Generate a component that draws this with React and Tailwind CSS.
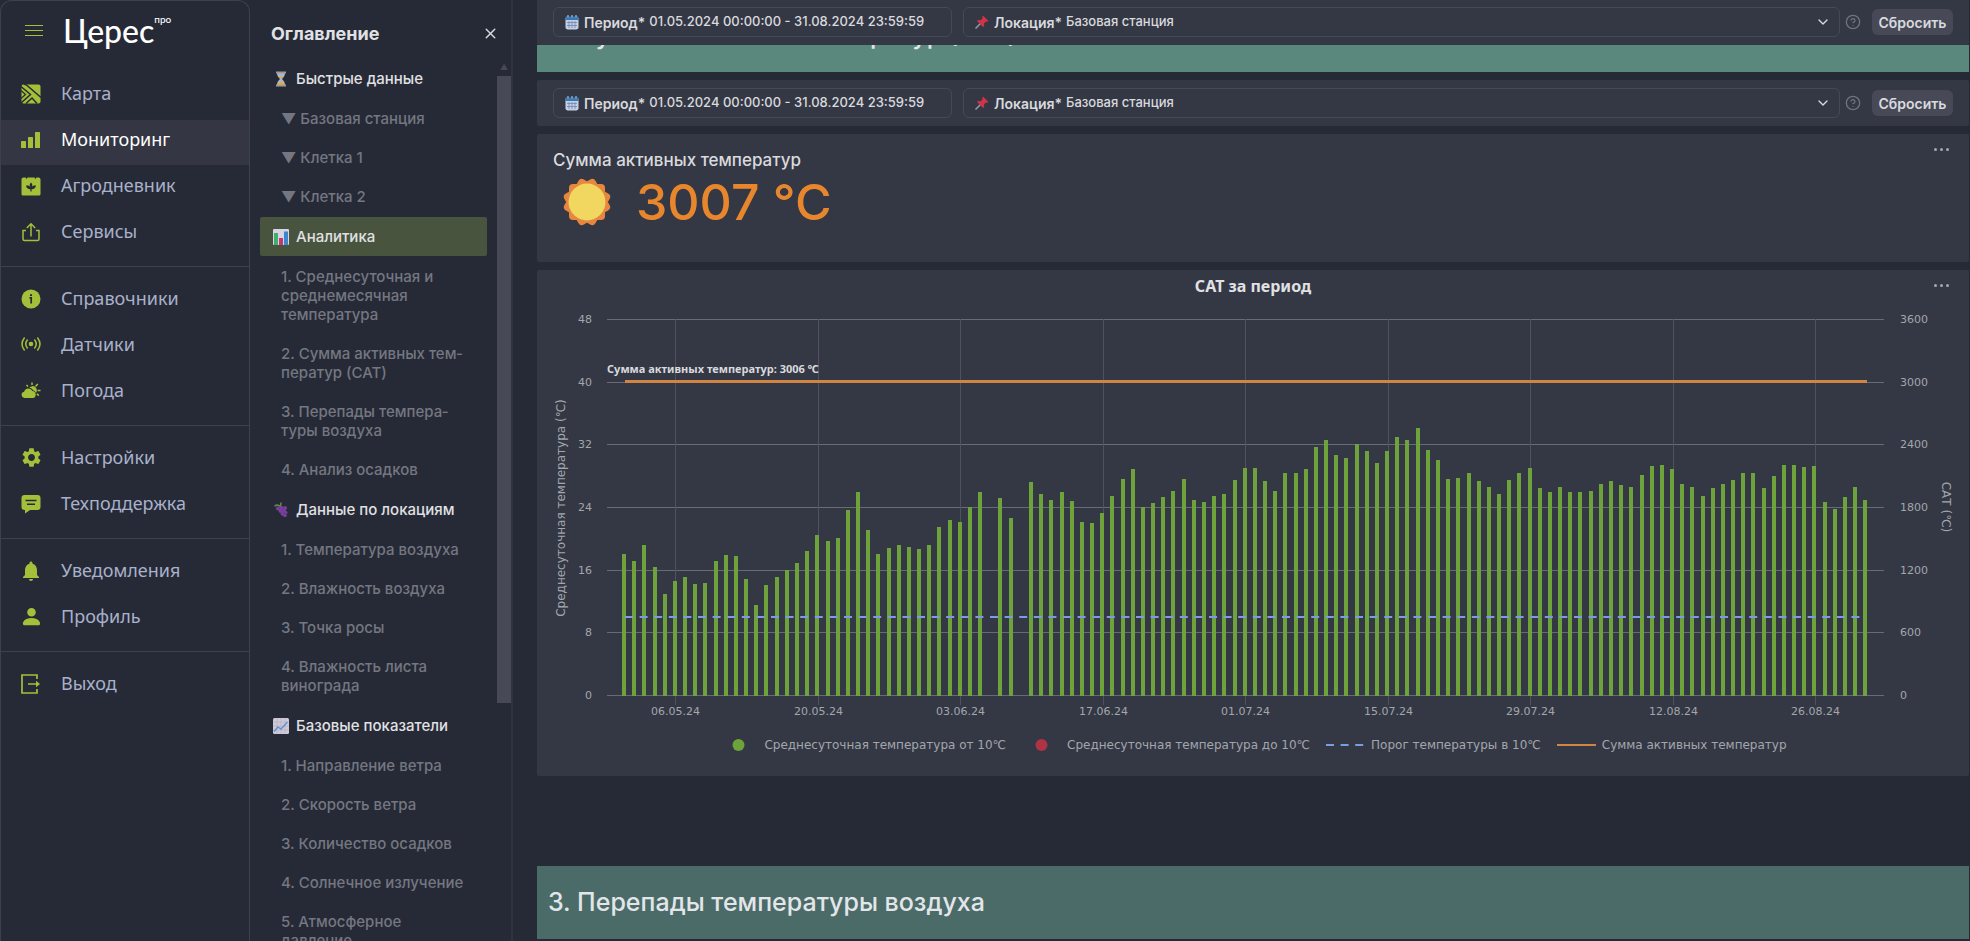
import { MdSettings, MdNotifications } from 'react-icons/md';
import { BsPersonFill } from 'react-icons/bs';
import { LuChevronDown, LuCircleHelp, LuX } from 'react-icons/lu';

const temps = [
  18.0, 17.1, 19.1, 16.3, 12.9, 14.6, 15.1, 14.2, 14.3, 17.1, 17.9, 17.7, 14.8, 11.5, 14.0, 15.1, 15.9, 16.8, 18.4, 20.4,
  19.7, 20.0, 23.6, 25.9, 21.1, 18.0, 18.8, 19.2, 18.9, 18.7, 19.1, 21.4, 22.4, 22.1, 24.0, 25.9, null, 25.2, 22.6, null,
  27.2, 25.7, 24.9, 25.9, 24.8, 22.1, 21.9, 23.2, 25.4, 27.6, 28.9, 24.0, 24.5, 25.3, 26.1, 27.6, 24.9, 24.7, 25.4, 25.7,
  27.4, 29.0, 29.0, 27.3, 26.0, 28.4, 28.4, 28.9, 31.7, 32.6, 30.6, 30.3, 32.0, 31.2, 29.6, 31.2, 33.0, 32.6, 34.1, 31.3,
  30.0, 27.6, 27.7, 28.4, 27.3, 26.6, 25.7, 27.4, 28.3, 29.0, 26.4, 25.9, 26.5, 25.9, 25.9, 26.1, 26.9, 27.3, 26.8, 26.6,
  28.1, 29.2, 29.3, 28.8, 26.9, 26.6, 25.4, 26.4, 26.9, 27.4, 28.4, 28.4, 26.4, 28.0, 29.3, 29.3, 29.1, 29.2, 24.7, 23.7,
  25.3, 26.6, 24.9,
];

const dateTicks = ['06.05.24', '20.05.24', '03.06.24', '17.06.24', '01.07.24', '15.07.24', '29.07.24', '12.08.24', '26.08.24'];

/* ---------- menu icons ---------- */

const MapIcon = () => (
  <svg viewBox="0 0 20 20" className="size-5">
    <rect x="0.5" y="0.5" width="19" height="19" rx="2" fill="#a4bf3a" />
    <path d="M0 2.500 9.500 10.500 0 19M5 19.500 11 14l5 5.500M5.500 1 20 13.500M3 0l2.500 1" fill="none" stroke="#262a36" strokeWidth="1.500" />
    <path d="M0 6.500 4.500 10.500 0 14.500" fill="none" stroke="#262a36" strokeWidth="1.300" />
  </svg>
);

const BarsIcon = () => (
  <svg viewBox="0 0 20 20" className="size-5" fill="#a4bf3a">
    <rect x="0" y="11" width="5" height="7" rx="0.6" />
    <rect x="7" y="7" width="5" height="11" rx="0.6" />
    <rect x="14" y="2" width="5" height="16" rx="0.6" />
  </svg>
);

const DiaryIcon = () => (
  <svg viewBox="0 0 20 20" className="size-5">
    <path d="M2.500 1.500h2l1 1.500 1-1.500h7l1 1.500 1-1.500h2a2 2 0 0 1 2 2V18a1.500 1.500 0 0 1-1.500 1.500H2A1.500 1.500 0 0 1 .5 18V3.500a2 2 0 0 1 2-2Z" fill="#a4bf3a" />
    <path d="M10 6.500c1.600 1.500 1.600 3.300.8 4.400 1-1 2.500-1.500 4.200-1.200-.5 2.400-2.200 3.600-4.400 3.500v2.300H9.400v-2.300C7.200 13.300 5.500 12.100 5 9.700c1.700-.3 3.200.2 4.200 1.200-.8-1.100-.8-2.900.8-4.400Z" fill="#262a36" />
  </svg>
);

const ShareIcon = () => (
  <svg viewBox="0 0 20 20" className="size-5" fill="none" stroke="#a4bf3a" strokeWidth="1.500">
    <path d="M5 8.500H2v8.500q0 1.500 1.500 1.500h13q1.500 0 1.500-1.500V8.500h-3" />
    <path d="M10 14.500V2M5.800 6 10 1.800 14.200 6" />
  </svg>
);

const InfoIcon = () => (
  <svg viewBox="0 0 20 20" className="size-5">
    <circle cx="10" cy="10" r="9.500" fill="#a4bf3a" />
    <path d="M10 5.200v1.900" stroke="#262a36" strokeWidth="2" />
    <path d="M8.500 8.800H10.200V14.500" fill="none" stroke="#262a36" strokeWidth="1.700" />
  </svg>
);

const SensorIcon = () => (
  <svg viewBox="0 0 20 20" className="size-5" fill="none" stroke="#a4bf3a" strokeWidth="1.500" strokeLinecap="round">
    <circle cx="10" cy="9" r="2.300" fill="#a4bf3a" stroke="none" />
    <path d="M6.300 5Q3.200 9 6.300 13M3.300 3Q-1.300 9 3.300 15M13.700 5Q16.800 9 13.700 13M16.700 3Q21.300 9 16.700 15" />
  </svg>
);

const WeatherIcon = () => (
  <svg viewBox="0 0 20 20" className="size-5">
    <path d="M3.400 17a3.200 3.200 0 0 1-.3-6.300A4.500 4.500 0 0 1 11.500 10a3.600 3.600 0 0 1 .7 7Z" fill="#a4bf3a" />
    <path d="M8.300 6.700a4 4 0 0 1 6.600 5.300 4.600 4.600 0 0 0-2.700-2.700 5.500 5.500 0 0 0-3.900-2.600Z" fill="#a4bf3a" />
    <path d="M11 4V1.500M14.500 5.500l2.300-2.500M16.500 9.500H19.500M15.800 12.800l2 1.800M7 5.500 5.500 4" stroke="#a4bf3a" strokeWidth="1.500" />
  </svg>
);

const ChatIcon = () => (
  <svg viewBox="0 0 20 20" className="size-5">
    <path d="M3.500 1h13a3 3 0 0 1 3 3v9a3 3 0 0 1-3 3H9l-5 3.500V16h-.5a3 3 0 0 1-3-3V4a3 3 0 0 1 3-3Z" fill="#a4bf3a" />
    <path d="M4.500 6.500h11M6 10.300h8" stroke="#262a36" strokeWidth="1.500" />
  </svg>
);

const ExitIcon = () => (
  <svg viewBox="0 0 20 20" className="size-5" fill="none" stroke="#a4bf3a" strokeWidth="1.700">
    <path d="M16 5V1H1v18h15v-4M7 10h10" />
    <path d="M15 6.800 19 10l-4 3.200Z" fill="#a4bf3a" stroke="none" />
  </svg>
);

/* ---------- small coloured pictograms ---------- */

const HourglassIcon = () => (
  <svg viewBox="0 0 16 16" className="size-4">
    <path d="M4 2h8c0 3-1.500 4.500-3 6 1.500 1.500 3 3 3 6H4c0-3 1.500-4.500 3-6C5.500 6.500 4 5 4 2Z" fill="#9dbbe0" />
    <path d="M5.500 5h5Q10 6.500 8 8 6 6.500 5.500 5ZM4.800 14Q5.500 10.500 8 10t3.200 4Z" fill="#e0ad4e" />
    <path d="M3 .5h10v2H3ZM3 13.500h10v2H3Z" fill="#a99a90" />
  </svg>
);

const ChartEmoji = () => (
  <svg viewBox="0 0 16 16" className="size-4">
    <rect width="16" height="16" rx="1" fill="#d7d4e6" />
    <rect x="1" y="4" width="4" height="12" fill="#43ad6b" />
    <rect x="6" y="9" width="4" height="7" fill="#c23a72" />
    <rect x="11" y="2.500" width="4" height="13.500" fill="#3b86cc" />
  </svg>
);

const GrapesIcon = () => (
  <svg viewBox="0 0 16 16" className="size-4">
    <path d="M1.500 4q3-2 6 .5l.5-4" fill="none" stroke="#5d8a48" strokeWidth="1.600" />
    <g fill="#7a3f9d">
      <circle cx="5" cy="6.500" r="2" />
      <circle cx="8.500" cy="6" r="2" />
      <circle cx="12" cy="6" r="2" />
      <circle cx="7.500" cy="9" r="2" />
      <circle cx="11" cy="9" r="2" />
      <circle cx="9.500" cy="11.800" r="1.900" />
      <circle cx="12" cy="13.500" r="1.800" />
      <circle cx="13" cy="10.500" r="1.500" />
    </g>
  </svg>
);

const TrendIcon = () => (
  <svg viewBox="0 0 16 16" className="size-4">
    <rect width="16" height="16" rx="1.500" fill="#cdcbd8" />
    <path d="M4 0v16M8 0v16M12 0v16M0 4h16M0 8h16M0 12h16" stroke="#b6adc4" strokeWidth="0.6" />
    <path d="M1 13.500 5 9l3 2 6.500-7" fill="none" stroke="#5e94cf" strokeWidth="1.400" />
  </svg>
);

const CalendarIcon = () => (
  <svg viewBox="0 0 16 16" className="size-4 shrink-0">
    <path d="M1.500 4h13v9.500q0 1.500-2 2h-9q-2-.5-2-2Z" fill="#c6cfe2" />
    <path d="M1.500 2.500h13V6h-13Z" fill="#3c77b5" />
    <path d="M4 1v2.500M8 1v2.500M12 1v2.500" stroke="#b9d0ea" strokeWidth="1" />
    <path d="M5 7v7M8 7v7M11 7v7M3 8.500h10M3 11.500h10" stroke="#6c86b8" strokeWidth="0.8" />
  </svg>
);

const PinIcon = () => (
  <svg viewBox="0 0 16 16" className="size-4 shrink-0">
    <path d="M1.500 14.500 7 9" stroke="#8d98a8" strokeWidth="1.600" />
    <path d="M9 1.500 14.500 7l-1.800.8-.9-.3-1.800 2 .2 2.500-1 1L3 7l1-1 2.500.2 2-1.800-.3-1.100Z" fill="#d13446" />
  </svg>
);

const SunIcon = () => (
  <svg viewBox="0 0 50 50" className="size-[50px]">
    {[0, 30, 60].map((a) => (
      <rect key={a} x="7" y="7" width="36" height="36" rx="4" fill="#e6863f" transform={`rotate(${a} 25 25)`} />
    ))}
    <circle cx="25" cy="25" r="18.500" fill="#f1d65f" />
  </svg>
);

/* ---------- left menu ---------- */

const menu = [
  [
    { label: 'Карта', icon: <MapIcon /> },
    { label: 'Мониторинг', icon: <BarsIcon />, active: true },
    { label: 'Агродневник', icon: <DiaryIcon /> },
    { label: 'Сервисы', icon: <ShareIcon /> },
  ],
  [
    { label: 'Справочники', icon: <InfoIcon /> },
    { label: 'Датчики', icon: <SensorIcon /> },
    { label: 'Погода', icon: <WeatherIcon /> },
  ],
  [
    { label: 'Настройки', icon: <MdSettings size={23} /> },
    { label: 'Техподдержка', icon: <ChatIcon /> },
  ],
  [
    { label: 'Уведомления', icon: <MdNotifications size={24} /> },
    { label: 'Профиль', icon: <BsPersonFill size={23} /> },
  ],
  [{ label: 'Выход', icon: <ExitIcon /> }],
];

function Sidebar() {
  return (
    <aside className="w-[250px] shrink-0 rounded-t-xl border border-b-0 border-[#3d414d] bg-[#262a36]">
      <div className="flex h-[73px] items-start gap-5 pl-6 pt-3">
        <button aria-label="Меню" className="mt-3 flex w-[18px] flex-col gap-1">
          <span className="h-px bg-[#a4bf3a]" />
          <span className="h-px bg-[#a4bf3a]" />
          <span className="h-px bg-[#a4bf3a]" />
        </button>
        <a href="#home" className="flex items-start font-['Lato'] font-medium text-white">
          <span className="text-[32px] leading-9">Церес</span>
          <span className="text-[10px] leading-3">про</span>
        </a>
      </div>
      <nav>
        {menu.map((group, i) => (
          <ul key={i} className={i ? 'mt-[9px] border-t border-[#3d414d] pt-3' : ''}>
            {group.map((item) => (
              <li key={item.label}>
                <a
                  href="#menu"
                  className={`mb-px flex h-[45px] items-center gap-5 pb-1.5 pl-5 font-['Noto_Sans'] text-[18px] ${
                    item.active ? 'bg-[#343743] text-white' : 'text-[#a9b1cb]'
                  }`}
                >
                  <span className="flex w-5 justify-center text-[#a4bf3a] [&>svg]:shrink-0">{item.icon}</span>
                  {item.label}
                </a>
              </li>
            ))}
          </ul>
        ))}
      </nav>
    </aside>
  );
}

/* ---------- table of contents ---------- */

const toc = [
  {
    title: 'Быстрые данные',
    icon: <HourglassIcon />,
    items: ['▼ Базовая станция', '▼ Клетка 1', '▼ Клетка 2'],
  },
  {
    title: 'Аналитика',
    icon: <ChartEmoji />,
    active: true,
    items: [
      '1. Среднесуточная и среднемесячная температура',
      '2. Сумма активных тем\u00adператур (САТ)',
      '3. Перепады темпера\u00adтуры воздуха',
      '4. Анализ осадков',
    ],
  },
  {
    title: 'Данные по локациям',
    icon: <GrapesIcon />,
    items: ['1. Температура воздуха', '2. Влажность воздуха', '3. Точка росы', '4. Влажность листа винограда'],
  },
  {
    title: 'Базовые показатели',
    icon: <TrendIcon />,
    items: [
      '1. Направление ветра',
      '2. Скорость ветра',
      '3. Количество осадков',
      '4. Солнечное излучение',
      '5. Атмосферное давление',
    ],
  },
];

function Contents() {
  return (
    <section className="flex w-[263px] shrink-0 flex-col border-r-2 border-[#31343f] bg-[#262a36]">
      <div className="flex h-[58px] shrink-0 items-center justify-between pl-[21px] pr-3 pt-2">
        <h2 className="text-[18px] font-bold text-[#e0e1e4]">Оглавление</h2>
        <button aria-label="Закрыть" className="text-[#d8dade]">
          <LuX size={17} />
        </button>
      </div>
      <div className="flex min-h-0 flex-1 overflow-hidden">
        <div className="min-w-0 flex-1 pl-2.5 text-[15px] leading-[19px] font-medium">
          {toc.map((section) => (
            <div key={section.title}>
              <a
                href="#section"
                className={`my-px flex items-center gap-[7px] rounded-xs px-[13px] py-2.5 text-[#e0e1e4] ${
                  section.active ? 'bg-[#49543f]' : ''
                }`}
              >
                {section.icon}
                {section.title}
              </a>
              {section.items.map((item) => (
                <a key={item} href="#item" className="block py-2.5 pl-[21px] pr-4 text-[#747781]">
                  {item}
                </a>
              ))}
            </div>
          ))}
        </div>
        <div className="ml-2.5 flex w-[14px] flex-col items-center">
          <span className="flex h-[18px] items-center text-[8px] leading-none text-[#474a56]">▲</span>
          <span className="h-[627px] w-full bg-[#474a56]" />
        </div>
      </div>
    </section>
  );
}

/* ---------- dashboard ---------- */

function FilterBar({ id }) {
  return (
    <div className="flex h-[46px] items-center rounded-xs bg-[#343844] px-4 text-[14px] font-medium text-[#d9dade]">
      <div className="flex h-[30px] w-[399px] items-center rounded-md border border-[#464a56] px-2.5">
        <CalendarIcon />
        <label htmlFor={`${id}-period`} className="ml-1 font-semibold">
          Период*
        </label>
        <input
          id={`${id}-period`}
          readOnly
          value="01.05.2024 00:00:00 - 31.08.2024 23:59:59"
          className="ml-1 min-w-0 flex-1 bg-transparent text-[13px] outline-none"
        />
      </div>
      <div className="ml-[11px] flex h-[30px] flex-1 items-center rounded-md border border-[#464a56] pl-2.5 pr-2">
        <PinIcon />
        <label htmlFor={`${id}-location`} className="ml-1 font-semibold">
          Локация*
        </label>
        <select id={`${id}-location`} className="ml-1 flex-1 appearance-none bg-transparent text-[13px] outline-none">
          <option>Базовая станция</option>
        </select>
        <LuChevronDown size={16} />
      </div>
      <LuCircleHelp size={16} className="ml-[5px] mr-[11px] text-[#6f737e]" />
      <button className="h-[26px] w-[81px] rounded-md bg-[#474a56] font-semibold">Сбросить</button>
    </div>
  );
}

function Banner({ children }) {
  return (
    <h2 className="flex h-[73px] shrink-0 items-center px-[11px] text-[25px] font-medium text-[#e3e6e8]">{children}</h2>
  );
}

function MoreButton() {
  return (
    <button aria-label="Ещё" className="absolute right-5 top-[11px] flex h-2 items-center gap-[3px]">
      <span className="size-[3px] rounded-full bg-[#a5a8b0]" />
      <span className="size-[3px] rounded-full bg-[#a5a8b0]" />
      <span className="size-[3px] rounded-full bg-[#a5a8b0]" />
    </button>
  );
}

const LEFT = 70;
const RIGHT = 1347;
const BOTTOM = 425;
const DAY = 10.175;
const dayX = (i) => 88 + i * DAY;
const tempY = (t) => BOTTOM - (t * 376) / 48;

function TemperatureChart() {
  return (
    <svg viewBox="0 34 1432 421" className="block w-full font-['DejaVu_Sans'] text-[11px]" fill="#a3a6ad">
      {[0, 1, 2, 3, 4, 5, 6].map((n) => {
        const y = Math.round(tempY(n * 8)) + 0.5;
        return (
          <g key={n}>
            <path d={`M${LEFT} ${y}H${RIGHT}`} stroke="#686b75" />
            <text x="55" y={y + 3} textAnchor="end">
              {n * 8}
            </text>
            <text x="1363" y={y + 3}>
              {n * 600}
            </text>
          </g>
        );
      })}
      {dateTicks.map((label, n) => {
        const x = Math.floor(dayX(5 + n * 14)) + 0.5;
        return (
          <g key={label}>
            <path d={`M${x} 49V435`} stroke="#50535e" />
            <text x={x} y="445" textAnchor="middle">
              {label}
            </text>
          </g>
        );
      })}
      {temps.map((t, i) =>
        t === null ? null : (
          <rect
            key={i}
            x={Math.round(dayX(i)) - 3}
            y={Math.round(tempY(t))}
            width="4"
            height={BOTTOM + 1 - Math.round(tempY(t))}
            fill="#6ea33b"
          />
        )
      )}
      <path d="M88 347H1329" stroke="#7a9be6" strokeWidth="2" strokeDasharray="8 6.600" />
      <path d="M88 111.500H1330" stroke="#d08545" strokeWidth="3" />
      <text x={LEFT} y="103" fill="#d9dade" className="font-['Noto_Sans'] text-[11px] font-bold">
        Сумма активных температур: 3006 ℃
      </text>
      <text transform="translate(28 238) rotate(-90)" textAnchor="middle" className="text-[12px]">
        Среднесуточная температура (℃)
      </text>
      <text transform="translate(1405 237) rotate(90)" textAnchor="middle" className="text-[12px]">
        САТ (℃)
      </text>
    </svg>
  );
}

function LegendItem({ dot, line, dashed, children }) {
  return (
    <li className="flex items-center gap-1.5">
      <svg width="39" height="12" aria-hidden="true">
        {dot && <circle cx="19.500" cy="6" r="6" fill={dot} />}
        {line && <path d="M0 6H39" stroke={line} strokeWidth="2" strokeDasharray={dashed ? '8 6.600' : undefined} />}
      </svg>
      {children}
    </li>
  );
}

function Dashboard() {
  return (
    <main className="ml-6 mr-px min-w-0 flex-1 overflow-hidden">
      <div className="-mt-px">
        <FilterBar id="top" />
      </div>
      {/* scrolled under the filter bar, only its lower edge shows */}
      <div className="flex h-[27px] flex-col justify-end overflow-hidden bg-[#5b887c]">
        <Banner>2. Сумма активных температур (САТ)</Banner>
      </div>
      <div className="mt-2 flex flex-col gap-2">
        <FilterBar id="sat" />
        <section className="relative h-[128px] rounded-xs bg-[#343844] px-4 pt-4">
          <MoreButton />
          <h3 className="text-[17px] leading-5 font-medium text-[#d9dade]">Сумма активных температур</h3>
          <div className="flex h-16 items-center gap-6 pl-[9px]">
            <SunIcon />
            <span className="text-[50px] leading-none font-medium text-[#e8862e]">3007 °C</span>
          </div>
        </section>
        <section className="relative rounded-xs bg-[#343844] pb-5">
          <MoreButton />
          <h3 className="h-[34px] text-center font-['Noto_Sans'] text-[16px] leading-8 font-bold text-[#e0e1e4]">
            САТ за период
          </h3>
          <TemperatureChart />
          <ul className="flex h-[31px] items-end justify-center gap-4 pb-[3px] font-['DejaVu_Sans'] text-[12px] leading-4 text-[#a3a6ad]">
            <LegendItem dot="#6ea33b">Среднесуточная температура от 10℃</LegendItem>
            <LegendItem dot="#b03245">Среднесуточная температура до 10℃</LegendItem>
            <LegendItem line="#7a9be6" dashed>
              Порог температуры в 10℃
            </LegendItem>
            <LegendItem line="#d08545">Сумма активных температур</LegendItem>
          </ul>
        </section>
      </div>
      <div className="mt-[90px] bg-[#4b6b69]">
        <Banner>3. Перепады температуры воздуха</Banner>
      </div>
    </main>
  );
}

export default function App() {
  return (
    <div className="flex h-screen overflow-hidden bg-[#262a36] font-['Inter',sans-serif]">
      <Sidebar />
      <Contents />
      <Dashboard />
    </div>
  );
}
